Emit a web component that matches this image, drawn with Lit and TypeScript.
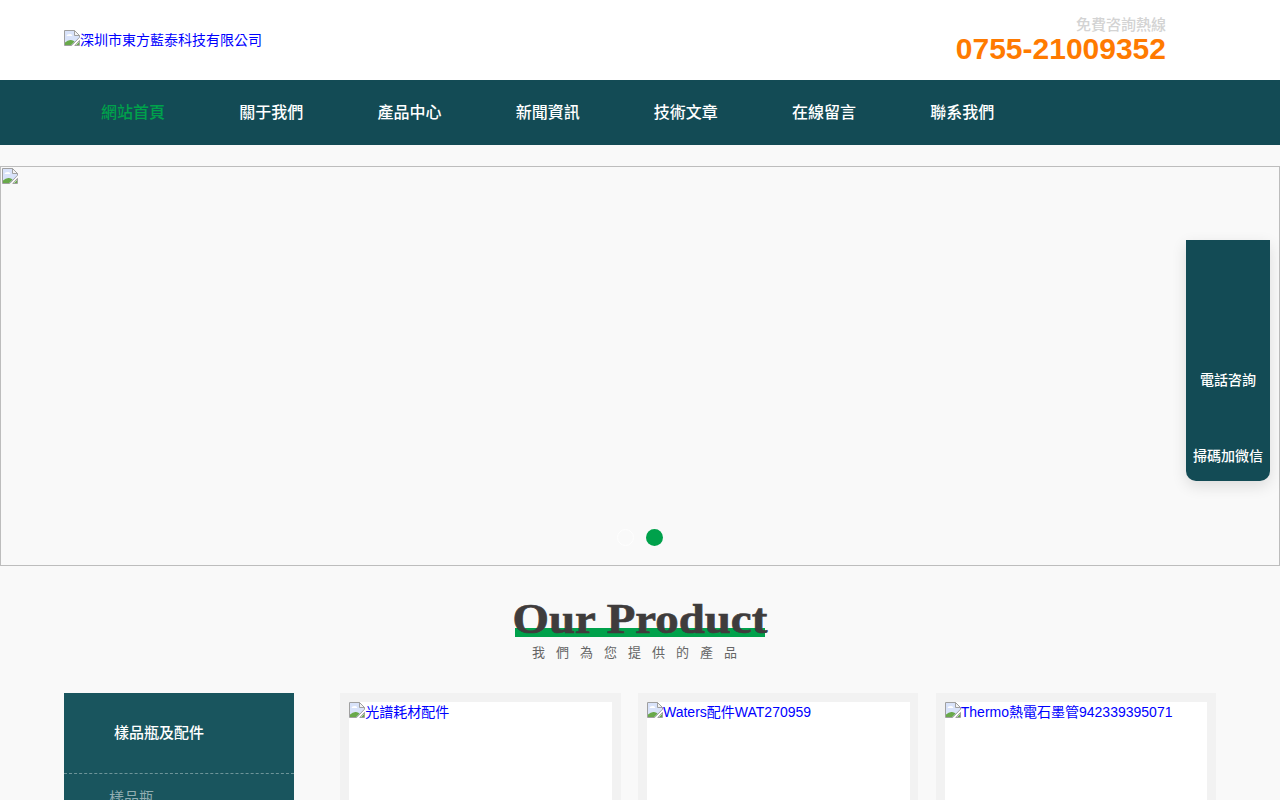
import { LitElement, html, css } from "lit";
import { customElement } from "lit/decorators.js";

const broken = html`<svg class="bi" width="16" height="16" viewBox="0 0 16 16" aria-hidden="true">
  <path d="M.5.5H10.5L15.5 5.5V7.2L7.7 15.5H.5Z" fill="#cfdcf8" stroke="#a0a0a0"/>
  <path d="M10.5.5V5.5H15.5Z" fill="#f4f4f4" stroke="#a0a0a0"/>
  <path d="M1 1H10V6H15V7L7.5 15H1Z" fill="#dbe5fa" opacity=".8"/>
  <path d="M2.5 6Q3 3.8 5 4.2Q7.6 3.4 8.4 6Z" fill="#fff"/>
  <path d="M1 15V12.6Q4 9.6 7 10Q9 10.2 10.6 11.4L7.2 15Z" fill="#69a94a"/>
  <path d="M15.5 10.4V15.5H10.8Z" fill="#fff" stroke="#a0a0a0"/>
  <path d="M15 12V15H12.2Z" fill="#69a94a"/>
</svg>`;

const nav = ["網站首頁", "關于我們", "產品中心", "新聞資訊", "技術文章", "在線留言", "聯系我們"];
const cards = ["光譜耗材配件", "Waters配件WAT270959", "Thermo熱電石墨管942339395071"];

@customElement("app-root")
export class AppRoot extends LitElement {
  static styles = css`
    :host {
      display: block;
      position: relative;
      width: 1280px;
      height: 800px;
      overflow: hidden;
      background: #f9f9f9;
      font-family: "Liberation Sans", "Noto Sans CJK TC", sans-serif;
      font-size: 14px;
      color: #333;
    }
    a { color: #00f; text-decoration: none; }
    .bi { display: inline-block; vertical-align: top; flex: none; }
    .top {
      height: 80px;
      background: #fff;
      display: flex;
      align-items: center;
      justify-content: space-between;
      padding: 0 114px 0 64px;
    }
    .logo { display: flex; align-items: flex-start; height: 20px; line-height: 20px; margin-top: -1px; }
    .tel { text-align: right; }
    .tel .lab { font-size: 15px; line-height: 18px; font-weight: 500; color: #d3d3d3; }
    .tel .num { font-size: 30px; line-height: 30px; font-weight: bold; color: #ff7a00; }
    .nav {
      height: 65px;
      background: #134b55;
      display: flex;
      padding-left: 64px;
      margin-bottom: 21px;
    }
    .nav a {
      width: 138.2px;
      text-align: center;
      line-height: 65px;
      font-size: 16px;
      font-weight: 500;
      color: #fff;
    }
    .nav a.on { color: #00a14b; }
    .banner {
      position: relative;
      box-sizing: border-box;
      height: 400px;
      border: 1px solid #bdbdbd;
      padding: 1px;
    }
    .dot {
      position: absolute;
      top: 362px;
      width: 17px;
      height: 17px;
      box-sizing: border-box;
      border-radius: 50%;
    }
    .dot.a { left: 616px; border: 1px solid #fff; }
    .dot.b { left: 645px; background: #00a14b; }
    .head { height: 127px; display: flex; flex-direction: column; align-items: center; padding-top: 30px; box-sizing: border-box; }
    .title {
      font-family: "Liberation Serif", serif;
      font-size: 43px;
      font-weight: bold;
      line-height: 46px;
      height: 41px;
      color: #3f3c3c;
      white-space: nowrap;
      position: relative;
    }
    .title::before {
      content: "";
      position: absolute;
      left: 50%;
      margin-left: -125px;
      width: 250px;
      top: 32px;
      height: 9px;
      background: #00a14b;
    }
    .title span {
      position: relative;
      display: block;
      transform: scaleX(1.09);
      -webkit-text-stroke: 0.7px #3f3c3c;
    }
    .sub { font-size: 13px; letter-spacing: 11px; line-height: 16px; margin-top: 8px; color: #666; }
    .main { display: flex; padding-left: 64px; }
    .side { width: 230px; height: 200px; background: #19555e; margin-right: 46.4px; flex: none; }
    .side .h {
      height: 81px;
      box-sizing: border-box;
      border-bottom: 1px dashed #6d9499;
      padding-left: 50px;
      line-height: 79px;
      font-size: 15px;
      font-weight: 500;
      color: #fff;
    }
    .side .i { padding: 14px 0 0 45px; font-size: 15px; line-height: 20px; color: #93aeb2; }
    .grid { display: flex; gap: 17.6px; width: 875.8px; }
    .card { flex: 1; min-width: 0; height: 300px; padding: 9px 8.8px; background: #f2f2f2; }
    .card .in { height: 100%; background: #fff; line-height: 20px; }
    .card a { display: block; white-space: nowrap; overflow: hidden; }
    .float {
      position: absolute;
      left: 1186px;
      top: 240px;
      width: 84px;
      height: 241px;
      box-sizing: border-box;
      background: #134b55;
      border-radius: 0 0 10px 10px;
      box-shadow: 0 5px 15px rgba(0, 0, 0, 0.12);
      text-align: center;
      color: #fff;
      font-size: 14px;
      font-weight: 500;
    }
    .float .p1 { padding-top: 130px; height: 76px; box-sizing: content-box; line-height: 20px; }
    .float .p2 { font-size: 14px; line-height: 20px; white-space: nowrap; }
  `;

  render() {
    return html`
      <div class="top">
        <a class="logo" href="#">${broken}深圳市東方藍泰科技有限公司</a>
        <div class="tel">
          <div class="lab">免費咨詢熱線</div>
          <div class="num">0755-21009352</div>
        </div>
      </div>
      <div class="nav">
        ${nav.map((n, i) => html`<a href="#" class=${i === 0 ? "on" : ""}>${n}</a>`)}
      </div>
      <div class="banner">
        ${broken}
        <span class="dot a"></span>
        <span class="dot b"></span>
      </div>
      <div class="head">
        <div class="title"><span>Our Product</span></div>
        <div class="sub">我們為您提供的產品</div>
      </div>
      <div class="main">
        <div class="side">
          <div class="h">樣品瓶及配件</div>
          <div class="i">樣品瓶</div>
        </div>
        <div class="grid">
          ${cards.map(
            (c) => html`<div class="card"><div class="in"><a href="#">${broken}${c}</a></div></div>`
          )}
        </div>
      </div>
      <div class="float">
        <div class="p1">電話咨詢</div>
        <div class="p2">掃碼加微信</div>
      </div>
    `;
  }
}
